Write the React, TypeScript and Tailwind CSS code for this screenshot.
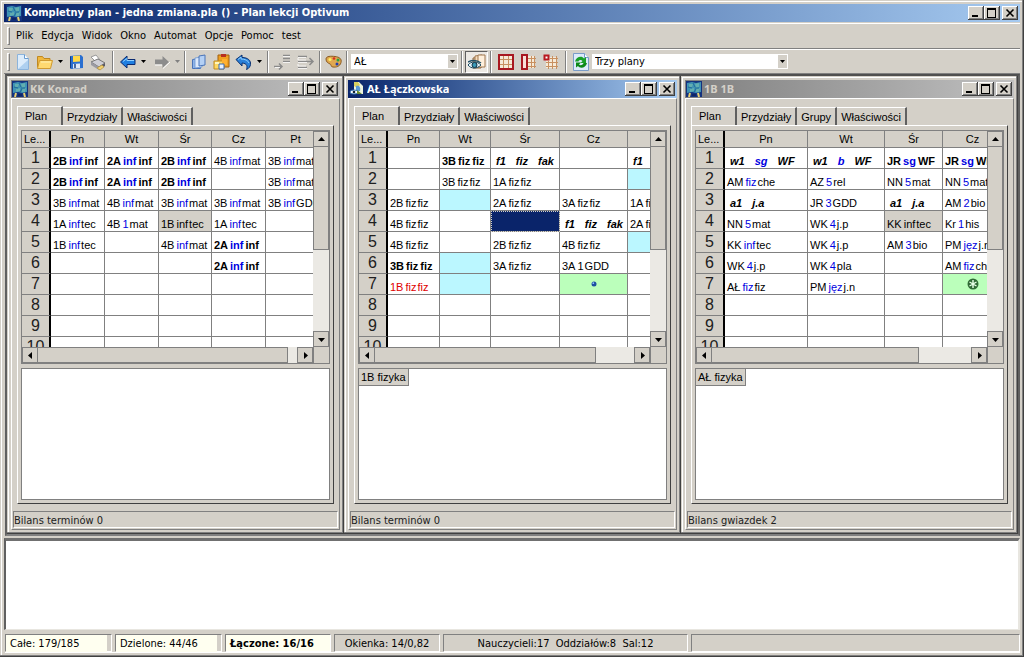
import { useState } from "react"
import type { ReactNode } from "react"
import clsx from "clsx"

type Cell = {
  text?: string
  bold?: boolean
  italic?: boolean
  color?: string
  bg?: string
  mark?: "dot" | "star"
}

type Plan = {
  title: string
  active?: boolean
  icon: "board" | "person"
  tabs: string[]
  columns: { label: string; width: number }[]
  rows: Record<string, Cell>[]
  roomColor: string
  thumb: string
  hint?: string
  status: string
}

const n = (text: string): Cell => ({ text })
const b = (text: string): Cell => ({ text, bold: true })
const it = (text: string): Cell => ({ text, italic: true })
const cyan: Cell = { bg: "bg-[#bbf7ff]" }

const plans: Plan[] = [
  {
    title: "KK Konrad",
    icon: "board",
    tabs: ["Plan", "Przydziały", "Właściwości"],
    columns: [
      { label: "Pn", width: 54 },
      { label: "Wt", width: 54 },
      { label: "Śr", width: 53 },
      { label: "Cz", width: 54 },
      { label: "Pt", width: 60 },
    ],
    rows: [
      { Pn: b("2B inf inf"), Wt: b("2A inf inf"), Śr: b("2B inf inf"), Cz: n("4B inf mat"), Pt: n("3B inf mat") },
      { Pn: b("2B inf inf"), Wt: b("2A inf inf"), Śr: b("2B inf inf"), Pt: n("3B inf mat") },
      { Pn: n("3B inf mat"), Wt: n("4B inf mat"), Śr: n("3B inf mat"), Cz: n("3B inf mat"), Pt: n("3B inf GDD") },
      { Pn: n("1A inf tec"), Wt: n("4B 1 mat"), Śr: { text: "1B inf tec", bg: "bg-[#d4d0c8]", color: "text-black" }, Cz: n("1A inf tec") },
      { Pn: n("1B inf tec"), Śr: n("4B inf mat"), Cz: b("2A inf inf") },
      { Cz: b("2A inf inf") },
      {},
      {},
      {},
      {},
    ],
    roomColor: "text-[#0000e0]",
    thumb: "w-[250px]",
    status: "Bilans terminów 0",
  },
  {
    title: "AŁ Łączkowska",
    active: true,
    icon: "person",
    tabs: ["Plan", "Przydziały", "Właściwości"],
    columns: [
      { label: "Pn", width: 52 },
      { label: "Wt", width: 51 },
      { label: "Śr", width: 69 },
      { label: "Cz", width: 68 },
      { label: "Pt", width: 69 },
    ],
    rows: [
      { Wt: b("3B fiz fiz"), Śr: it("f1 fiz fak"), Pt: it("f1 fiz fak") },
      { Wt: n("3B fiz fiz"), Śr: n("1A fiz fiz"), Pt: cyan },
      { Pn: n("2B fiz fiz"), Wt: cyan, Śr: n("2A fiz fiz"), Cz: n("3A fiz fiz"), Pt: n("1A fiz fiz") },
      { Pn: n("4B fiz fiz"), Śr: { bg: "bg-[#0a246a] outline outline-dotted outline-[#d4d0c8] -outline-offset-1" }, Cz: it("f1 fiz fak"), Pt: n("2A fiz fiz") },
      { Pn: n("4B fiz fiz"), Śr: n("2B fiz fiz"), Cz: n("4B fiz fiz"), Pt: cyan },
      { Pn: b("3B fiz fiz"), Wt: cyan, Śr: n("3A fiz fiz"), Cz: n("3A 1 GDD") },
      { Pn: { text: "1B fiz fiz", color: "text-[#e00000]" }, Wt: cyan, Cz: { bg: "bg-[#bbffbb]", mark: "dot" } },
      {},
      {},
      {},
    ],
    roomColor: "",
    thumb: "w-[221px]",
    hint: "1B fizyka",
    status: "Bilans terminów 0",
  },
  {
    title: "1B 1B",
    icon: "board",
    tabs: ["Plan", "Przydziały", "Grupy", "Właściwości"],
    columns: [
      { label: "Pn", width: 83 },
      { label: "Wt", width: 77 },
      { label: "Śr", width: 58 },
      { label: "Cz", width: 60 },
    ],
    rows: [
      { Pn: it("w1 sg WF"), Wt: it("w1 b WF"), Śr: b("JR sg WF"), Cz: b("JR sg WF") },
      { Pn: n("AM fiz che"), Wt: n("AZ 5 rel"), Śr: n("NN 5 mat"), Cz: n("NN 5 mat") },
      { Pn: it("a1 j.a"), Wt: n("JR 3 GDD"), Śr: it("a1 j.a"), Cz: n("AM 2 bio") },
      { Pn: n("NN 5 mat"), Wt: n("WK 4 j.p"), Śr: { text: "KK inf tec", bg: "bg-[#d4d0c8]", color: "text-black" }, Cz: n("Kr 1 his") },
      { Pn: n("KK inf tec"), Wt: n("WK 4 j.p"), Śr: n("AM 3 bio"), Cz: n("PM jęz j.n") },
      { Pn: n("WK 4 j.p"), Wt: n("WK 4 pla"), Cz: n("AM fiz che") },
      { Pn: n("AŁ fiz fiz"), Wt: n("PM jęz j.n"), Cz: { bg: "bg-[#bbffbb]", mark: "star" } },
      {},
      {},
      {},
    ],
    roomColor: "text-[#0000e0]",
    thumb: "w-[207px]",
    hint: "AŁ fizyka",
    status: "Bilans gwiazdek 2",
  },
]

const menu = ["Plik", "Edycja", "Widok", "Okno", "Automat", "Opcje", "Pomoc", "test"]

function BoardIcon() {
  return (
    <svg width="16" height="16" viewBox="0 0 16 16" className="shrink-0">
      <rect width="16" height="16" fill="#14327e" />
      <path d="M1 2l5-1 4 1 5-1v10l-5 1-4-1-5 1z" fill="#3f93b4" />
      <path d="M3 3l4 0-1 3-3 1zM9 3l4-1v4l-3 1zM4 8l4-1 0 3-4 1zM10 8l4-1-1 4-3 0z" fill="#62aeb0" />
      <path d="M7 2l2 4M2 6l4 1M9 7l4 0M8 11l2-3" stroke="#1f6a9a" />
      <path d="M4 12l-1 4M12 12l1 4" stroke="#e8d070" strokeWidth="2" />
      <path d="M6 14h4" stroke="#0a1a50" />
    </svg>
  )
}

function PersonIcon() {
  return (
    <svg width="16" height="16" viewBox="0 0 16 16" className="shrink-0">
      <path d="M5 1h5l4 4v8H5z" fill="#eef4e0" />
      <path d="M5 1l4 0 2 3-3 3-3-2z" fill="#d8d060" />
      <path d="M7 5c3-1 5 1 4 5H7z" fill="#5b9bd5" />
      <ellipse cx="5" cy="11" rx="4" ry="2" fill="#fff" stroke="#3a78b8" />
      <circle cx="5" cy="11" r="1.3" fill="#123" />
      <path d="M8 9l5 4H8z" fill="#6a8a30" />
    </svg>
  )
}

function WindowButtons({ label }: { label: string }) {
  const btn =
    "flex h-[14px] w-4 items-center justify-center bg-[#d4d0c8] shadow-[inset_-1px_-1px_#404040,inset_1px_1px_#fff,inset_-2px_-2px_#808080]"
  return (
    <div className="ml-auto flex shrink-0 pr-0.5">
      <button aria-label={`Minimalizuj ${label}`} className={btn}>
        <svg width="16" height="14"><path d="M4 10h6" stroke="#000" strokeWidth="2" /></svg>
      </button>
      <button aria-label={`Maksymalizuj ${label}`} className={btn}>
        <svg width="16" height="14" shapeRendering="crispEdges"><path d="M3.5 3v8h8V3M3 3h9" fill="none" stroke="#000" /><path d="M3 3h9" stroke="#000" strokeWidth="2" /></svg>
      </button>
      <button aria-label={`Zamknij ${label}`} className={clsx(btn, "ml-0.5")}>
        <svg width="16" height="14"><path d="M4.5 3.5l7 7M11.5 3.5l-7 7" stroke="#000" strokeWidth="1.6" /></svg>
      </button>
    </div>
  )
}

function Arrow({ dir }: { dir: "up" | "down" | "left" | "right" }) {
  const paths = {
    up: "M4 9h7L7.500 5z",
    down: "M4 6h7L7.500 10z",
    left: "M9 4v7L5 7.500z",
    right: "M6 4v7l4-3.500z",
  }
  return (
    <svg width="15" height="15" viewBox="0 0 15 15" className="shrink-0">
      <path d={paths[dir]} fill="#000" />
    </svg>
  )
}

const scrollButton = "flex size-4 shrink-0 items-center justify-center border border-[#808080] bg-[#d4d0c8]"

function LessonText({ cell, roomColor }: { cell: Cell; roomColor: string }) {
  const parts = (cell.text ?? "").split(" ")
  const hasRoom = parts.length > 2
  const plain = !cell.bold && !cell.italic
  return (
    <span
      className={clsx(
        "flex pt-[5px] text-[11px] leading-[14px]",
        cell.italic ? "gap-2.5 pl-[5px] font-bold italic" : "pl-0.5",
        cell.bold && "gap-0.5 font-bold",
        plain && "gap-px",
        cell.color ?? "text-black",
      )}
    >
      {parts.map((part, i) => (
        <span key={i} className={clsx(plain && i === 0 && "mr-px", hasRoom && i === 1 && !cell.color && roomColor)}>
          {part}
        </span>
      ))}
    </span>
  )
}

function Mark({ kind }: { kind: "dot" | "star" }) {
  return (
    <svg width="12" height="12" viewBox="0 0 12 12" className="mx-auto">
      {kind === "dot" ? (
        <>
          <circle cx="6" cy="6" r="2.500" fill="#1d4fa0" />
          <circle cx="5.300" cy="5.200" r="0.900" fill="#8fc0ff" />
        </>
      ) : (
        <>
          <circle cx="6" cy="6" r="5.500" fill="#2f6a35" />
          <path d="M6 2v8M2.500 4l7 4M9.500 4l-7 4" stroke="#e8ffe8" strokeWidth="1.400" />
        </>
      )}
    </svg>
  )
}

function PlanGrid({ plan }: { plan: Plan }) {
  const total = plan.columns.reduce((sum, c) => sum + c.width, 29)
  return (
    <div className="border border-[#808080] bg-[#d4d0c8]">
      <div className="flex">
        <div className="h-[216px] min-w-0 flex-1 overflow-hidden bg-white">
          <table className="table-fixed border-separate border-spacing-0" style={{ width: total }}>
            <colgroup>
              <col style={{ width: 29 }} />
              {plan.columns.map((c) => (
                <col key={c.label} style={{ width: c.width }} />
              ))}
            </colgroup>
            <thead>
              <tr className="h-[17px] bg-[#d4d0c8] text-[11px] leading-4">
                <th className="border-r-2 border-b border-r-black border-b-[#808080] pl-0.5 text-left font-normal">Le...</th>
                {plan.columns.map((c) => (
                  <th key={c.label} className="border-r border-b border-[#808080] font-normal">
                    {c.label}
                  </th>
                ))}
              </tr>
            </thead>
            <tbody>
              {plan.rows.map((row, i) => (
                <tr key={i} className="h-[21px]">
                  <th className="border-r-2 border-b border-r-black border-b-[#808080] bg-[#d4d0c8] text-center text-base leading-5 font-normal text-[#202020]">
                    {i + 1}
                  </th>
                  {plan.columns.map((c) => {
                    const cell = row[c.label] ?? {}
                    return (
                      <td
                        key={c.label}
                        className={clsx("overflow-hidden border-r border-b border-[#808080] whitespace-nowrap", cell.bg)}
                      >
                        {cell.text && <LessonText cell={cell} roomColor={plan.roomColor} />}
                        {cell.mark && <Mark kind={cell.mark} />}
                      </td>
                    )
                  })}
                </tr>
              ))}
            </tbody>
          </table>
        </div>
        <div className="flex w-4 shrink-0 flex-col bg-[#ebe9e4]">
          <button aria-label="W górę" className={scrollButton}><Arrow dir="up" /></button>
          <div className="h-[103px] border border-t-0 border-[#808080] bg-[#d4d0c8]" />
          <button aria-label="W dół" className={clsx(scrollButton, "mt-auto")}><Arrow dir="down" /></button>
        </div>
      </div>
      <div className="flex">
        <div className="flex min-w-0 flex-1 bg-[#ebe9e4]">
          <button aria-label="W lewo" className={scrollButton}><Arrow dir="left" /></button>
          <div className={clsx("border border-l-0 border-[#808080] bg-[#d4d0c8]", plan.thumb)} />
          <button aria-label="W prawo" className={clsx(scrollButton, "ml-auto")}><Arrow dir="right" /></button>
        </div>
        <div className="w-4 shrink-0 border-l border-[#808080]" />
      </div>
    </div>
  )
}

function PlanWindow({ plan }: { plan: Plan }) {
  const [tab, setTab] = useState(plan.tabs[0])
  return (
    <section className="flex min-w-0 flex-1 flex-col bg-[#d4d0c8] p-1 shadow-[inset_-1px_-1px_#404040,inset_-2px_-2px_#808080,inset_1px_1px_#d4d0c8,inset_2px_2px_#fff]">
      <header
        className={clsx(
          "flex h-[18px] shrink-0 items-center gap-0.5 pl-px font-['Noto_Sans','Open_Sans',sans-serif] text-[11px] font-bold",
          plan.active
            ? "bg-linear-to-r from-[#0a246a] to-[#a6caf0] text-white"
            : "bg-linear-to-r from-[#808080] to-[#c0c0c0] text-[#d4d0c8]",
        )}
      >
        {plan.icon === "board" ? <BoardIcon /> : <PersonIcon />}
        <h2 className="truncate leading-4">{plan.title}</h2>
        <WindowButtons label={plan.title} />
      </header>
      <div className="flex flex-1 flex-col border border-t-white border-r-[#808080] border-b-[#808080] border-l-white pt-[7px]">
        <div role="tablist" className="ml-[5px] flex items-end text-[11px] leading-4">
          {plan.tabs.map((t) => (
            <button
              key={t}
              role="tab"
              aria-selected={t === tab}
              onClick={() => setTab(t)}
              className={clsx(
                "border-t border-r-2 border-t-white border-r-[#606060]",
                t === tab ? "-mb-px h-5 border-l border-l-white bg-[#d4d0c8] pr-3.5 pb-0.5 pl-[7px]" : "h-[18px] px-1 pt-px",
              )}
            >
              {t}
            </button>
          ))}
        </div>
        <div className="mr-[5px] ml-[5px] flex flex-1 flex-col border border-t-white border-r-[#404040] border-b-[#404040] border-l-white px-[3px] pt-1 pb-[3px]">
          <PlanGrid plan={plan} />
          <div className="mt-1 flex-1 border border-[#808080] bg-white">
            {plan.hint && (
              <span className="inline-block border-r border-b border-[#808080] bg-[#d4d0c8] px-0.5 text-[11px] leading-4">
                {plan.hint}
              </span>
            )}
          </div>
        </div>
        <footer className="mx-px mt-[7px] mb-px h-[17px] border border-t-[#808080] border-r-white border-b-white border-l-[#808080] font-['DejaVu_Sans_Condensed','Noto_Sans',sans-serif] text-[11px] leading-[17px] text-[#202020]">
          {plan.status}
        </footer>
      </div>
    </section>
  )
}

function Separator() {
  return <div className="h-[22px] w-0.5 shrink-0 border-l border-[#808080] border-r border-r-white" />
}

function Tool({ label, className, children }: { label: string; className?: string; children: ReactNode }) {
  return (
    <button aria-label={label} title={label} className={clsx("flex h-[22px] shrink-0 items-center justify-center", className ?? "w-[18px]")}>
      <svg width="18" height="18" viewBox="0 0 18 18" className="shrink-0">{children}</svg>
    </button>
  )
}

function DropArrow({ label, disabled }: { label: string; disabled?: boolean }) {
  return (
    <button aria-label={label} disabled={disabled} className="flex h-[22px] w-3 shrink-0 items-center justify-center">
      <svg width="5" height="3"><path d="M0 0h5L2.500 3z" fill={disabled ? "#808080" : "#000"} /></svg>
    </button>
  )
}

function Combo({ label, value, width }: { label: string; value: string; width: string }) {
  return (
    <div className={clsx("relative h-[15px] bg-white", width)}>
      <select
        aria-label={label}
        defaultValue={value}
        className="block h-[15px] w-full appearance-none bg-white pl-[3px] text-[11px] leading-[15px] outline-none"
      >
        <option>{value}</option>
      </select>
      <span className="pointer-events-none absolute top-px right-px flex h-[13px] w-[9px] items-center justify-center bg-[#d4d0c8]">
        <svg width="5" height="3"><path d="M0 0h5L2.500 3z" fill="#000" /></svg>
      </span>
    </div>
  )
}

function Toolbar() {
  return (
    <div className="flex h-[25px] shrink-0 items-center border-t border-b border-t-white border-b-[#808080] pl-[3px]">
      <div className="mr-1 h-[18px] w-[3px] border border-t-white border-r-[#808080] border-b-[#808080] border-l-white" />
      <Tool label="Nowy">
        <path d="M3.500 1.500h7l4 4v11h-11z" fill="#dcecfb" stroke="#8cb4dc" />
        <path d="M10.500 1.500v4h4" fill="#fff" stroke="#6a9ccf" />
        <path d="M4 16l10-9v9z" fill="#aed0f0" />
      </Tool>
      <Tool label="Otwórz" className="ml-1 w-[18px]">
        <path d="M1.500 14.500v-11h5l1.500 2h6v3" fill="#f0b840" stroke="#c08820" />
        <path d="M1.500 15.500l2-8h13l-2 8z" fill="#ffd970" stroke="#d09a30" />
        <path d="M5 9h10" stroke="#fff2b8" />
      </Tool>
      <DropArrow label="Ostatnie pliki" />
      <Tool label="Zapisz" className="ml-px w-[18px]">
        <path d="M3 3l11-1 2 2v11l-12 1z" fill="#2a6fd0" />
        <path d="M6 3l7-.500v6l-7 .500z" fill="#ffd94a" />
        <path d="M6 11l7-.500v4.500l-7 .500z" fill="#dfe9f6" />
        <path d="M3 3v12l1 1V4z" fill="#123c80" />
        <path d="M8 11v4" stroke="#123c80" strokeWidth="1.500" />
      </Tool>
      <Tool label="Drukuj" className="ml-1 w-[18px]">
        <path d="M2 4l5-2 4 5-4 2z" fill="#fff" stroke="#999" />
        <path d="M2 9l7-3 7 4-6 4z" fill="#cfcfd6" stroke="#777" />
        <path d="M2 9l8 5v3l-8-5z" fill="#9a9aa2" />
        <path d="M10 14l6-4v3l-6 4z" fill="#5c5c66" />
        <path d="M8 15l5-3 2 2-4 3z" fill="#f0d070" stroke="#b08a30" strokeWidth=".600" />
      </Tool>
      <div className="ml-[5px]"><Separator /></div>
      <Tool label="Wstecz" className="ml-[5px] w-[18px]">
        <path d="M1.500 9L8 3v3.500h8v5H8V15z" fill="#1f7ee0" stroke="#0a2a70" />
        <path d="M4 8.500l4-3v2h7" fill="none" stroke="#8fd0ff" />
      </Tool>
      <DropArrow label="Historia wstecz" />
      <Tool label="Dalej" className="ml-1 w-[18px]">
        <path d="M16 9L9.500 3v3.500H2v5h7.500V15z" fill="#8c8c8c" />
        <path d="M2 12h7M10 15.500l7-6.500" stroke="#fff" />
      </Tool>
      <DropArrow label="Historia dalej" disabled />
      <div className="ml-px"><Separator /></div>
      <Tool label="Kopiuj" className="ml-1 w-[18px]">
        <path d="M2.500 6.500l8-1v10h-8z" fill="#8fb4e8" stroke="#4a74b8" />
        <path d="M5 5l7-1v10l-7 1z" fill="#dce9fb" stroke="#6a94d0" strokeWidth=".800" />
        <path d="M9 3l6-1v10l-6 1z" fill="#b4d0f4" stroke="#4a74b8" />
      </Tool>
      <Tool label="Wklej" className="ml-1 w-[18px]">
        <path d="M6 2h11v12H6z" fill="#f0a020" stroke="#a06010" />
        <path d="M9 1h5v3H9z" fill="#b83020" />
        <path d="M2 8h10v8H2z" fill="#ffd860" stroke="#c08a20" />
        <path d="M10 6h5v6h-5z" fill="#ffb030" />
        <path d="M7 11h5v5H7z" fill="#e8f2ff" stroke="#3a6ab0" />
        <path d="M3 10h4" stroke="#fff6c0" strokeWidth="2" />
      </Tool>
      <Tool label="Cofnij" className="ml-[5px] w-[18px]">
        <path d="M1 6.500L7 2v2.500c6 0 9 3 8.500 7-.300 2-1.500 4-4 5 1-3 1-6-4.500-6.500v3z" fill="#2a80d8" stroke="#0a3070" />
        <path d="M3 6.500l3-2.500v2c4 0 7 1.500 8 4" fill="none" stroke="#8fd0ff" />
      </Tool>
      <DropArrow label="Historia zmian" />
      <div className="ml-0.5"><Separator /></div>
      <Tool label="Wstaw wiersz" className="ml-1 w-[18px]">
        <path d="M1 13.500h7M6 10.500l3 3-3 3M10 2.500h7M10 5.500h7M10 8.500h7" fill="none" stroke="#8a8a8a" strokeWidth="1.500" />
        <path d="M10 3.500h7M10 9.500h7M2 14.500h5" stroke="#fff" strokeWidth=".800" />
      </Tool>
      <Tool label="Usuń wiersz" className="ml-1.5 w-[18px]">
        <path d="M1 3.500h9M1 8.500h14M1 14.500h9M12.500 5l3.500 3.500-3.500 3.500" fill="none" stroke="#8a8a8a" strokeWidth="1.500" />
        <path d="M1 4.500h8M1 9.500h9M1 15.500h9M1 5v2h8M1 11v2h8" fill="none" stroke="#fff" strokeWidth=".800" />
      </Tool>
      <div className="ml-1"><Separator /></div>
      <Tool label="Kolory" className="ml-1 w-[18px]">
        <path d="M1 6c0-3 5-3 9-2.500s7 2 6 6-5 5-8 4.500-1-2-3-3S1 9 1 6z" fill="#e0a850" stroke="#8a5a20" />
        <circle cx="5" cy="6.500" r="1.500" fill="#fff060" />
        <circle cx="9" cy="5.500" r="1.300" fill="#d83020" />
        <circle cx="13" cy="7" r="1.500" fill="#30a040" />
        <circle cx="12" cy="11" r="1.500" fill="#2040b0" />
      </Tool>
      <div className="ml-[3px]"><Separator /></div>
      <div className="ml-[3px]"><Combo label="Nauczyciel" value="AŁ" width="w-[107px]" /></div>
      <div className="ml-[3px]"><Separator /></div>
      <Tool label="Podgląd" className="ml-0.5 w-[23px] border border-t-[#606060] border-r-white border-b-white border-l-[#606060] bg-[#ece9e4]">
        <path d="M5 5l8-1v11H5z" fill="#e8c8a0" stroke="#906840" />
        <path d="M7 3l7-1v12H7z" fill="#f6dcbc" stroke="#a07850" />
        <path d="M10 2h7v12h-7z" fill="#fff0dc" stroke="#a07850" />
        <path d="M0 12c3-4 9-4 13 0-4 4-10 4-13 0z" fill="#e6f4fa" stroke="#1a4a60" />
        <circle cx="6.500" cy="12" r="2.500" fill="#3a9ab8" stroke="#103040" />
        <path d="M0 9c4-2 9-2 13 1" fill="none" stroke="#205068" strokeWidth="1.500" />
      </Tool>
      <div className="ml-0.5"><Separator /></div>
      <Tool label="Cały plan" className="ml-[5px] w-[18px]">
        <path d="M2 2h14v14H2z" fill="#f6ead8" />
        <path d="M6.500 3v12M11.500 3v12M3 6.500h12M3 11.500h12" stroke="#c89060" />
        <path d="M2 2h14v14H2z" fill="none" stroke="#a81820" strokeWidth="2" />
      </Tool>
      <Tool label="Kolumna" className="ml-[5px] w-[18px]">
        <path d="M5 3h10v12H5z" fill="#f6ead8" />
        <path d="M11.500 3v12M7 5.500h9M7 9.500h9M7 13.500h9M14.500 3v12" stroke="#c89060" />
        <path d="M2 2h5v14H2z" fill="#f8e0d8" stroke="#a81820" strokeWidth="2" />
      </Tool>
      <Tool label="Komórka" className="ml-1 w-[18px]">
        <path d="M4 4h11v11H4z" fill="#f6ead8" />
        <path d="M6.500 8v8M10.500 3v13M14.500 3v13M8 5.500h8M4 9.500h12M4 13.500h12" stroke="#c89060" />
        <path d="M2.500 2.500h4v4h-4z" fill="#fff" stroke="#b81820" strokeWidth="2" />
      </Tool>
      <div className="ml-[5px]"><Separator /></div>
      <Tool label="Odśwież" className="ml-[5px] w-[18px]">
        <path d="M1.500 .500h11l4 4v13h-15z" fill="#dceafa" stroke="#7a9cc8" />
        <path d="M12.500 .500v4h4" fill="#fff" stroke="#7a9cc8" />
        <path d="M3 8.500c1-5 7-6 9-3l2-1.500v6H8.500l2-2C9 6.500 7 7 6.500 8.500z" fill="#18a028" />
        <path d="M15 10c-1 5-7 6-9 3l-2 1.500V9.500h5l-2 2c1.500 1.500 4 .500 4.500-1.500z" fill="#0c8818" />
      </Tool>
      <div className="ml-0.5"><Combo label="Układ okien" value="Trzy plany" width="w-[196px]" /></div>
    </div>
  )
}

const statusCell = "border border-t-[#808080] border-r-white border-b-white border-l-[#808080]"

export default function App() {
  return (
    <div className="flex min-h-screen flex-col bg-[#d4d0c8] p-1 font-['Liberation_Sans',Arial,sans-serif] text-black shadow-[inset_-1px_-1px_#404040,inset_-2px_-2px_#808080,inset_1px_1px_#d4d0c8,inset_2px_2px_#fff]">
      {/* Title bar */}
      <header className="flex h-[18px] shrink-0 items-center gap-0.5 bg-linear-to-r from-[#0a246a] to-[#a6caf0] pl-0.5 font-['DejaVu_Sans_Condensed','Noto_Sans',sans-serif] text-[11px] font-bold text-white">
        <BoardIcon />
        <h1 className="truncate leading-4">Kompletny plan - jedna zmiana.pla () - Plan lekcji Optivum</h1>
        <WindowButtons label="program" />
      </header>

      <div className="flex flex-1 flex-col font-['DejaVu_Sans_Condensed','Noto_Sans',sans-serif] text-[11px]">
        {/* Menu */}
        <nav className="mt-px flex h-[26px] shrink-0 items-center border-t border-b border-t-white border-b-[#808080] pl-[3px]">
          <div className="mr-1.5 h-[18px] w-[3px] border border-t-white border-r-[#808080] border-b-[#808080] border-l-white" />
          <div className="flex gap-2">
            {menu.map((item) => (
              <button key={item}>{item}</button>
            ))}
          </div>
        </nav>

        <Toolbar />

        {/* Plan windows */}
        <main className="ml-px flex flex-1 border-2 border-t-[#505050] border-r-[#606060] border-b-[#808080] border-l-[#606060] font-['Liberation_Sans',Arial,sans-serif]">
          {plans.map((plan) => (
            <PlanWindow key={plan.title} plan={plan} />
          ))}
        </main>

        {/* Messages */}
        <div className="mt-0.5 h-[92px] shrink-0 border-t-[3px] border-r-2 border-b border-l-2 border-t-[#707070] border-r-[#e8e6e0] border-b-[#e8e6e0] border-l-[#606060] bg-white" />

        {/* Status bar */}
        <footer className="mt-1 ml-px flex h-[19px] shrink-0 gap-[3px] border-b border-white leading-[17px]">
          <div className={clsx(statusCell, "w-[107px] pr-1")}><p className="bg-[#fffff0] pl-1">Całe: 179/185</p></div>
          <div className={clsx(statusCell, "w-[107px] pr-1")}><p className="bg-[#fffff0] pl-1">Dzielone: 44/46</p></div>
          <div className={clsx(statusCell, "w-[106px] bg-[#fffff0] pl-1 font-bold")}>Łączone: 16/16</div>
          <div className={clsx(statusCell, "w-[106px] text-center")}>Okienka: 14/0,82</div>
          <div className={clsx(statusCell, "w-[245px] text-center whitespace-pre")}>Nauczycieli:17  Oddziałów:8  Sal:12</div>
          <div className={clsx(statusCell, "flex-1")} />
        </footer>
      </div>
    </div>
  )
}
